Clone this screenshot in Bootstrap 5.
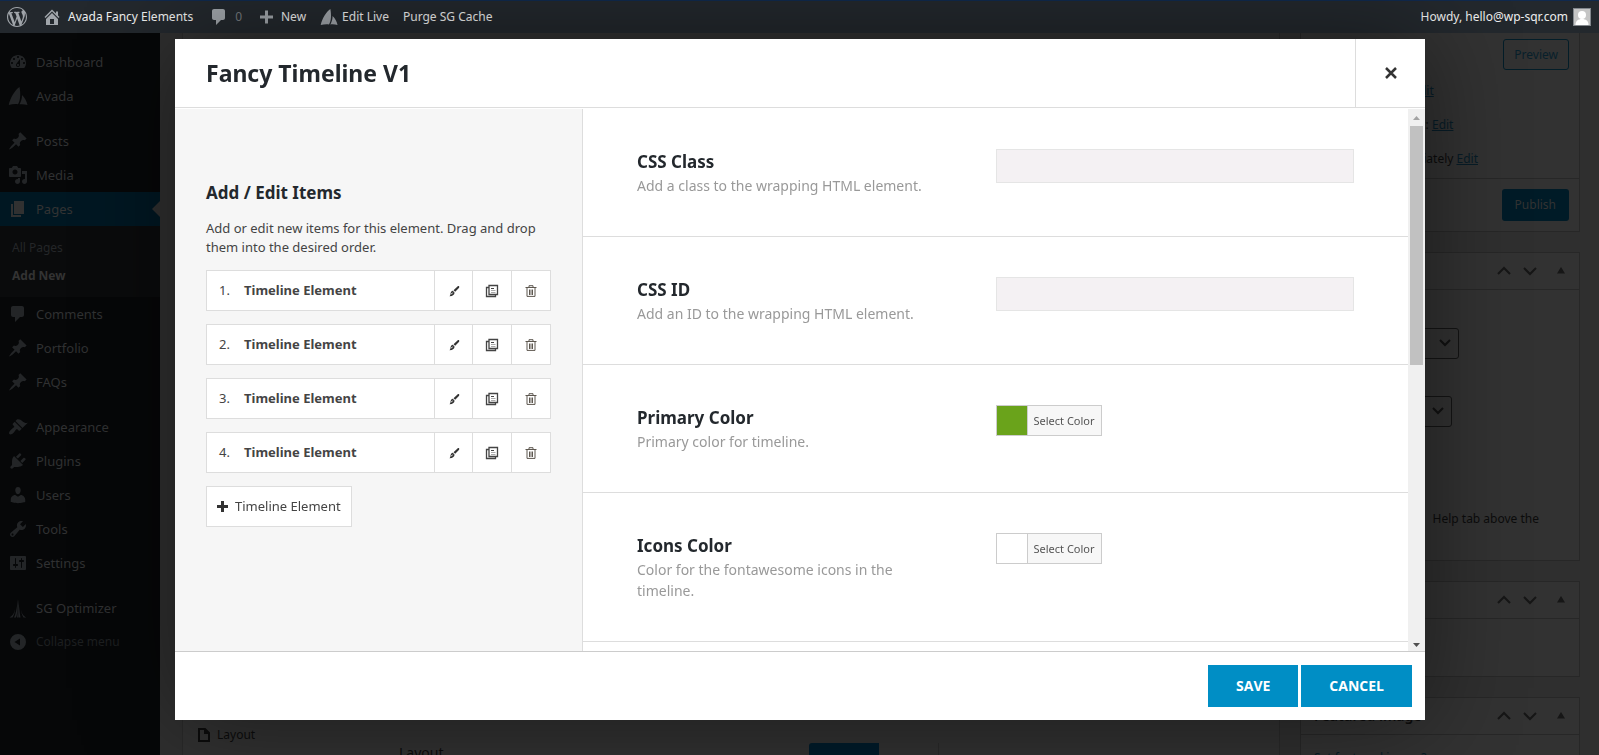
<!DOCTYPE html>
<html lang="en">
<head>
<meta charset="utf-8">
<meta name="viewport" content="width=device-width, initial-scale=1">
<title>Fancy Timeline V1</title>
<link rel="stylesheet" href="https://cdn.jsdelivr.net/npm/bootstrap@5.3.0/dist/css/bootstrap.min.css">
<style>
  body { height: 100vh; overflow: hidden; background: #2f2f2f; font: 12px/20px "Noto Sans", sans-serif; color: #0c0c0c; }
  a { color: inherit; text-decoration: none; }
  .ico { width: 20px; height: 20px; fill: currentColor; flex: none; }

  /* admin bar */
  .adminbar { height: 33px; background: #23282d; border-top: 1px solid #10294d; color: #eee; padding: 0 8px 0 0; }
  .adminbar a { height: 32px; padding: 0 7px; gap: 5px; }
  .adminbar .site { padding: 0 9px 0 8px; gap: 6px; }
  .adminbar .ico { color: #a0a5aa; }
  .adminbar .live { gap: 4px; }
  .adminbar .live .ico { width: 18px; height: 18px; }
  .adminbar .count { color: #75797d; gap: 6px; }
  .avatar { width: 18px; height: 18px; border: 1px solid #82878c; background: #c5c5c5; fill: #fff; }

  /* side menu */
  .sidemenu { width: 160px; flex: none; background: #060708; color: #303132; padding-top: 12px; font-size: 13px; }
  .sidemenu a { height: 34px; padding-left: 8px; gap: 8px; }
  .sidemenu .ico { color: #232527; }
  .sidemenu .gap-top { margin-top: 11px; }
  .sidemenu .current { background: #001722; color: #333; }
  .sidemenu .current .ico { color: #313131; }
  .sidemenu .current::after { content: ""; margin-left: auto; border: 8px solid transparent; border-right-color: #2f2f2f; border-left: 0; }
  .submenu { background: #0a0b0c; padding: 8px 0 7px; font-size: 12px; color: #242628; }
  .submenu a { height: 28px; padding-left: 12px; }
  .submenu .on { color: #333; font-weight: 700; }
  .sidemenu .fold { color: #1d1f20; font-size: 12px; }

  /* editor behind the dialog */
  .editor { padding: 0 19px 0 22px; gap: 20px; overflow: hidden; }
  .canvas { border: 1px solid #292929; border-top: 0; border-bottom: 0; background: #313131; padding: 0 14px; }
  .tab-row { height: 16px; gap: 6px; }
  .peek-row { height: 12px; }
  .layout-name { width: 612px; padding-left: 202px; font-size: 14px; }
  .blue-tab { width: 70px; height: 20px; border-radius: 3px 0 0 0; background: #001b2a; }
  .blue-gap { width: 60px; border-right: 1px solid #292929; }
  .boxes { width: 280px; flex: none; }
  .pbox { border: 1px solid #272727; background: #323232; margin-bottom: 20px; }
  .pbox header { height: 37px; border-bottom: 1px solid #272727; gap: 6px; padding: 0 8px 0 13px; font-size: 14px; font-weight: 600; }
  .pbox header svg { width: 20px; height: 20px; fill: none; stroke: #161616; stroke-width: 2; }
  .pbox header .tri { fill: #161616; stroke: none; margin-left: 5px; }
  .wpbtn { height: 31px; border: 1px solid #031d28; border-radius: 3px; background: transparent; color: #08202b; padding: 0 10px; }
  .wpbtn.full { height: 32px; border: 0; background: #001b27; color: #333; padding: 0 13px; }
  .boxes u { color: #071c27; }
  .preview-row { padding: 6px 10px 4px; }
  .publish-row { padding: 10px; border-top: 1px solid #272727; margin-top: 2px; }
  .pubrow { height: 34px; line-height: 34px; padding-left: 38px; }
  .wpsel { appearance: none; height: 31px; border: 1px solid #141414; border-radius: 3px; background: transparent; color: #0c0c0c; }
  .selwrap svg { position: absolute; right: 8px; top: 10px; width: 12px; height: 10px; fill: none; stroke: #111; stroke-width: 2; }
  .sel-parent { width: 147px; margin: 38px 0 37px 11px; }
  .sel-template { width: 140px; margin-left: 11px; }
  .help-note { padding: 82px 40px 0 0; }
  .thumb-link { padding: 13px; color: #071c27; display: block; }

  /* dialog */
  .layer { position: fixed; inset: 0; padding: 39px 174px 35px 175px; color: #444; font-size: 13px; }
  .dialog { background: #fff; box-shadow: 0 0 90px rgba(0, 0, 0, .45); }
  .dlg-head { height: 69px; border-bottom: 1px solid #ddd; }
  .dlg-head h1 { font-size: 23px; line-height: 32px; font-weight: 700; color: #23282d; padding-left: 31px; }
  .dlg-close { width: 70px; border: 0; border-left: 1px solid #ddd; background: #fff; color: #333; }
  .dlg-close svg { width: 14px; height: 14px; stroke: currentColor; stroke-width: 2.500; display: block; margin: 0 auto; }
  .dlg-body { min-height: 0; margin-top: 1px; }
  .items-pane { width: 408px; flex: none; background: #f6f6f6; border-right: 1px solid #ddd; padding: 71px 31px 0; line-height: 19px; }
  h2 { font-size: 17px; line-height: 26px; font-weight: 700; color: #23282d; margin: 0; }
  .items-pane p { margin: 13px 0; }
  .item { height: 41px; border: 1px solid #ddd; background: #fff; margin-bottom: 13px; }
  .item .num { width: 37px; padding-left: 12px; }
  .item strong { font-weight: 700; }
  .item button { width: 39px; border: 0; border-left: 1px solid #ddd; background: #fff; color: #444; padding: 0; }
  .item .num + strong + button { width: 38px; }
  .item svg { width: 14px; height: 14px; display: block; margin: auto; }
  .add-item { height: 41px; border: 1px solid #ddd; background: #fff; color: #444; gap: 7px; padding: 0 10px; }
  .add-item svg { width: 11px; height: 11px; fill: #333; }
  .opts { overflow: hidden; min-width: 0; }
  .opt { padding: 40px 54px; border-bottom: 1px solid #ddd; }
  .opt .about { width: 50%; padding-right: 50px; font-size: 14px; line-height: 21px; color: #999; }
  .opt label { font-size: 17px; line-height: 26px; font-weight: 700; color: #23282d; display: block; }
  .opt .field { width: 50%; }
  .opt input { width: 100%; height: 34px; display: block; background: #f4f1f3; border: 1px solid #e5e5e5; border-radius: 0; }
  .picker { height: 31px; border: 1px solid #ccc; background: #f7f7f7; padding: 0; font-size: 11px; color: #555; }
  .picker i { width: 31px; border-right: 1px solid #ccc; }
  .picker span { padding: 0 6px; line-height: 29px; }
  .sbar { width: 17px; flex: none; background: #f0f0f0; padding: 0 2px; }
  .sbar .thumb { height: 239px; background: #c1c1c1; }
  .sbar svg { height: 17px; width: 13px; flex: none; }
  .dlg-foot { height: 69px; border-top: 1px solid #ccc; padding-right: 13px; gap: 3px; }
  .dlg-foot button { height: 42px; border: 0; background: #008ec5; color: #fff; font: 700 14px/20px "Open Sans", sans-serif; padding: 0 28px; }
</style>
</head>
<body class="d-flex flex-column">

<svg class="d-none">
  <symbol id="wp" viewBox="0 0 20 20"><path d="M20 10c0-5.51-4.49-10-10-10C4.48 0 0 4.49 0 10c0 5.52 4.48 10 10 10 5.51 0 10-4.48 10-10zM7.78 15.37L4.37 6.22c.55-.02 1.17-.08 1.17-.08.5-.06.44-1.13-.06-1.11 0 0-1.45.11-2.37.11-.18 0-.37 0-.58-.01C4.12 2.69 6.87 1.11 10 1.11c2.33 0 4.45.87 6.05 2.34-.68-.11-1.65.39-1.65 1.58 0 .74.45 1.36.9 2.1.35.61.55 1.36.55 2.46 0 1.49-1.4 5-1.4 5l-3.03-8.37c.54-.02.82-.17.82-.17.5-.05.44-1.25-.06-1.22 0 0-1.44.12-2.38.12-.87 0-2.33-.12-2.33-.12-.5-.03-.56 1.2-.06 1.22l.92.08 1.26 3.41zM17.41 10c.24-.64.74-1.87.43-4.25.7 1.29 1.05 2.71 1.05 4.25 0 3.29-1.73 6.24-4.4 7.78.97-2.59 1.94-5.2 2.92-7.78zM6.1 18.09C3.12 16.65 1.11 13.53 1.11 10c0-1.3.23-2.48.72-3.59C3.25 10.3 4.67 14.2 6.1 18.09zm4.03-6.63l2.58 6.98c-.86.29-1.76.45-2.71.45-.79 0-1.57-.11-2.29-.33.81-2.38 1.62-4.74 2.42-7.1z"/></symbol>
  <symbol id="home" viewBox="0 0 20 20"><path d="M16 8.5l1.53 1.53-1.06 1.06L10 4.6l-6.47 6.49-1.06-1.06L10 2.5l4 4v-2h2v4zm-6-2.46l6 5.99V18H4v-5.97zM12 17v-5H8v5h4z"/></symbol>
  <symbol id="comment" viewBox="0 0 20 20"><path d="M5 2h9c1.1 0 2 .9 2 2v7c0 1.1-.9 2-2 2h-2l-5 5v-5H5c-1.1 0-2-.9-2-2V4c0-1.1.9-2 2-2z"/></symbol>
  <symbol id="plus" viewBox="0 0 20 20"><path d="M17 8.500v3h-5v5H9v-5H4v-3h5v-5h3v5z"/></symbol>
  <symbol id="avada" viewBox="0 0 20 20"><path d="M11.500 1C7 4 2 12 .8 19c3-.8 6-1.200 9.200-.8C12.500 14.500 12.800 8 11.500 1zM14 9c0 3.500-.8 6.300-2.500 9.300 3-.3 5.500 0 8 .7-.8-4-2.500-7-5.500-10z"/></symbol>
  <symbol id="dash" viewBox="0 0 20 20"><path d="M3.760 16h12.480c1.100-1.370 1.760-3.110 1.760-5 0-4.420-3.580-8-8-8s-8 3.580-8 8c0 1.890.66 3.630 1.760 5zM10 4c.55 0 1 .45 1 1s-.45 1-1 1-1-.45-1-1 .45-1 1-1zM6 6c.55 0 1 .45 1 1s-.45 1-1 1-1-.45-1-1 .45-1 1-1zm8 0c.55 0 1 .45 1 1s-.45 1-1 1-1-.45-1-1 .45-1 1-1zm-5.370 5.550L12 7v6c0 1.100-.9 2-2 2s-2-.9-2-2c0-.57.24-1.080.63-1.450zM4 10c.55 0 1 .45 1 1s-.45 1-1 1-1-.45-1-1 .45-1 1-1zm12 0c.55 0 1 .45 1 1s-.45 1-1 1-1-.45-1-1 .45-1 1-1zm-5 3c0-.55-.45-1-1-1s-1 .45-1 1 .45 1 1 1 1-.45 1-1z"/></symbol>
  <symbol id="pin" viewBox="0 0 20 20"><path d="M10.440 3.020l1.820-1.820 6.360 6.350-1.830 1.820c-1.050-.68-2.480-.57-3.410.36l-.75.75c-.92.93-1.040 2.350-.35 3.410l-1.830 1.820-2.410-2.410-2.800 2.790c-.42.42-3.380 2.710-3.800 2.290s1.860-3.390 2.280-3.810l2.790-2.790L4.100 9.360l1.830-1.820c1.050.69 2.480.57 3.400-.36l.75-.75c.93-.92 1.050-2.350.36-3.410z"/></symbol>
  <symbol id="media" viewBox="0 0 20 20"><path d="M13 11V4c0-.55-.45-1-1-1h-1.670L9 1H5L3.670 3H2c-.55 0-1 .45-1 1v7c0 .55.45 1 1 1h10c.55 0 1-.45 1-1zM7 4.500c1.380 0 2.500 1.120 2.500 2.500S8.380 9.500 7 9.500 4.500 8.380 4.500 7 5.620 4.500 7 4.500zM14 6h5v10.500c0 1.380-1.120 2.500-2.500 2.500S14 17.880 14 16.500s1.120-2.500 2.500-2.500c.17 0 .34.02.5.05V9h-3V6zm-4 8.050V13h2v3.500c0 1.380-1.120 2.500-2.500 2.500S7 17.880 7 16.500 8.120 14 9.500 14c.17 0 .34.02.5.05z"/></symbol>
  <symbol id="page" viewBox="0 0 20 20"><path d="M6 15V2h10v13H6zm-1 1h8v2H3V5h2v11z"/></symbol>
  <symbol id="brush" viewBox="0 0 20 20"><path d="M14.480 11.060L7.410 3.990l1.500-1.500c.5-.56 2.300-.47 3.510.32 1.210.8 1.430 1.280 2.910 2.100 1.180.64 2.450 1.260 4.450.85zm-.71.71L6.700 4.700 4.930 6.470c-.39.39-.39 1.020 0 1.410l1.060 1.060c.39.39.39 1.030 0 1.420-.6.6-1.430 1.110-2.210 1.690-.35.26-.7.53-1.010.84C1.430 14.230.4 16.080 1.400 17.070c.99 1 2.840-.03 4.180-1.360.31-.31.58-.66.85-1.020.57-.78 1.080-1.610 1.690-2.210.39-.39 1.020-.39 1.410 0l1.060 1.060c.39.39 1.020.39 1.410 0z"/></symbol>
  <symbol id="plug" viewBox="0 0 20 20"><path d="M13.110 4.360L9.870 7.600 8 5.730l3.240-3.240c.35-.34 1.050-.2 1.560.32.52.51.66 1.210.31 1.550zm-8 1.770l.91-1.120 9.010 9.010-1.190.84c-.71.71-2.630 1.160-3.820 1.160H6.140L4.900 17.260c-.59.59-1.540.59-2.120 0-.59-.58-.59-1.530 0-2.120l1.240-1.240v-3.880c0-1.130.4-3.190 1.090-3.890zm7.260 3.970l3.240-3.240c.34-.35 1.040-.21 1.550.31.52.51.66 1.210.31 1.550l-3.240 3.250z"/></symbol>
  <symbol id="user" viewBox="0 0 20 20"><path d="M10 9.250c-2.270 0-2.730-3.440-2.730-3.440C7 4.020 7.820 2 9.970 2c2.160 0 2.980 2.020 2.710 3.810 0 0-.41 3.440-2.680 3.440zm0 2.570L12.720 10c2.390 0 4.520 2.330 4.520 4.530v2.490s-3.650 1.130-7.240 1.130c-3.650 0-7.240-1.130-7.240-1.130v-2.490c0-2.250 1.940-4.480 4.470-4.480z"/></symbol>
  <symbol id="tool" viewBox="0 0 20 20"><path d="M16.680 9.770c-1.340 1.340-3.300 1.670-4.950.99l-5.410 6.520c-.99.99-2.590.99-3.580 0s-.99-2.590 0-3.570l6.520-5.420c-.68-1.650-.35-3.610.99-4.950 1.280-1.280 3.120-1.620 4.720-1.060l-2.890 2.890 2.820 2.820 2.860-2.870c.53 1.580.18 3.390-1.080 4.650zM3.810 16.210c.4.39 1.040.39 1.430 0 .4-.4.4-1.040 0-1.430-.39-.4-1.030-.4-1.430 0-.39.39-.39 1.030 0 1.430z"/></symbol>
  <symbol id="sliders" viewBox="0 0 20 20"><path d="M18 16V4c0-.55-.45-1-1-1H3c-.55 0-1 .45-1 1v12c0 .55.45 1 1 1h14c.55 0 1-.45 1-1zM8 11h1c.55 0 1 .45 1 1s-.45 1-1 1H8v1.500c0 .28-.22.5-.5.5s-.5-.22-.5-.5V13H6c-.55 0-1-.45-1-1s.45-1 1-1h1V5.500c0-.28.22-.5.5-.5s.5.22.5.5V11zm5-2h-1c-.55 0-1-.45-1-1s.45-1 1-1h1V5.500c0-.28.22-.5.5-.5s.5.22.5.5V7h1c.55 0 1 .45 1 1s-.45 1-1 1h-1v5.500c0 .28-.22.5-.5.5s-.5-.22-.5-.5V9z"/></symbol>
  <symbol id="sg" viewBox="0 0 20 20"><path d="M10 1c-1 6-1.500 14-4 18.500h2C9.500 16 9.800 8 10 1zm.3 0c0 7 0 13 .2 18.500h2C11.500 14 11 8 10.300 1zM10 1c.3 5-.2 14-.9 18.500h1.100zM13 11c.5 5 2.500 7 5.500 8.500h-3C14 17 13 14 13 11zM7 11c-.5 4-2.500 7-5.500 8.500h3C6 17 7 14 7 11z"/></symbol>
  <symbol id="fold" viewBox="0 0 20 20"><path fill-rule="evenodd" d="M10 2a8 8 0 1 0 0 16 8 8 0 0 0 0-16zm2 4.500v7L6.500 10z"/></symbol>
  <symbol id="up" viewBox="0 0 20 20"><path d="M4 13l6-6 6 6"/></symbol>
  <symbol id="down" viewBox="0 0 20 20"><path d="M4 7l6 6 6-6"/></symbol>
  <symbol id="tri" viewBox="0 0 20 20"><path d="M10 6l4 6.500H6z"/></symbol>
  <symbol id="edit" viewBox="0 0 14 14"><path d="M12 2.300c.6.600.3 1.100-.1 1.600L8.200 7.800 6.500 6.200l4-3.800c.5-.4 1-.6 1.500-.1z" fill="#333"/><path d="M5.800 6.800l1.700 1.600c.2 2-1.500 3.600-5 3.800 1-.8.800-1.700 1.100-2.900.3-1.300 1-2.400 2.200-2.500z" fill="#333"/><path d="M4.200 10.300l1.300-1.600" stroke="#fff"/></symbol>
  <symbol id="copy" viewBox="0 0 14 14"><path d="M4 1.500h8.500v9H4zM3.500 3.500h-2v9h9v-1.500" fill="none" stroke="#444" stroke-width="1.300"/><path d="M6 4.500h3" stroke="#444"/><path d="M6 6.500h4.500M6 8.500h4.500" stroke="#aaa"/></symbol>
  <symbol id="trash" viewBox="0 0 14 14"><path d="M1.500 3.500h11M5 3V1.700h4V3M3 4v8.400h8V4M5.500 5.500v5.500M7 5.500v5.500M8.500 5.500v5.500" fill="none" stroke="#5d574f"/></symbol>
</svg>

<nav class="adminbar d-flex align-items-center flex-shrink-0">
  <a class="d-flex align-items-center" href="#" aria-label="WordPress"><svg class="ico"><use href="#wp"/></svg></a>
  <a class="d-flex align-items-center site" href="#"><svg class="ico"><use href="#home"/></svg>Avada Fancy Elements</a>
  <a class="d-flex align-items-center count" href="#"><svg class="ico"><use href="#comment"/></svg>0</a>
  <a class="d-flex align-items-center" href="#"><svg class="ico"><use href="#plus"/></svg>New</a>
  <a class="d-flex align-items-center live" href="#"><svg class="ico"><use href="#avada"/></svg>Edit Live</a>
  <a class="d-flex align-items-center" href="#">Purge SG Cache</a>
  <a class="d-flex align-items-center ms-auto pe-0" href="#">Howdy, hello@wp-sqr.com<svg class="avatar" viewBox="0 0 16 16"><circle cx="8" cy="6" r="4"/><path d="M1.500 16c0-4 2.500-6 6.500-6s6.500 2 6.500 6z"/></svg></a>
</nav>

<div class="d-flex flex-grow-1 overflow-hidden">
  <nav class="sidemenu">
    <a class="d-flex align-items-center" href="#"><svg class="ico"><use href="#dash"/></svg>Dashboard</a>
    <a class="d-flex align-items-center" href="#"><svg class="ico"><use href="#avada"/></svg>Avada</a>
    <a class="d-flex align-items-center gap-top" href="#"><svg class="ico"><use href="#pin"/></svg>Posts</a>
    <a class="d-flex align-items-center" href="#"><svg class="ico"><use href="#media"/></svg>Media</a>
    <a class="d-flex align-items-center current" href="#"><svg class="ico"><use href="#page"/></svg>Pages</a>
    <div class="submenu">
      <a class="d-flex align-items-center" href="#">All Pages</a>
      <a class="d-flex align-items-center on" href="#">Add New</a>
    </div>
    <a class="d-flex align-items-center" href="#"><svg class="ico"><use href="#comment"/></svg>Comments</a>
    <a class="d-flex align-items-center" href="#"><svg class="ico"><use href="#pin"/></svg>Portfolio</a>
    <a class="d-flex align-items-center" href="#"><svg class="ico"><use href="#pin"/></svg>FAQs</a>
    <a class="d-flex align-items-center gap-top" href="#"><svg class="ico"><use href="#brush"/></svg>Appearance</a>
    <a class="d-flex align-items-center" href="#"><svg class="ico"><use href="#plug"/></svg>Plugins</a>
    <a class="d-flex align-items-center" href="#"><svg class="ico"><use href="#user"/></svg>Users</a>
    <a class="d-flex align-items-center" href="#"><svg class="ico"><use href="#tool"/></svg>Tools</a>
    <a class="d-flex align-items-center" href="#"><svg class="ico"><use href="#sliders"/></svg>Settings</a>
    <a class="d-flex align-items-center gap-top" href="#"><svg class="ico"><use href="#sg"/></svg>SG Optimizer</a>
    <a class="d-flex align-items-center fold" href="#"><svg class="ico"><use href="#fold"/></svg>Collapse menu</a>
  </nav>

  <main class="editor d-flex flex-grow-1">
    <section class="canvas flex-grow-1 d-flex flex-column justify-content-end">
      <div class="tab-row d-flex align-items-center">
        <svg width="14" height="14" viewBox="0 0 14 14" fill="none" stroke="#0c0c0c" stroke-width="2"><path d="M2 1h6l4 4v8H2zM8 1v4h4"/></svg>Layout
      </div>
      <div class="peek-row d-flex">
        <div class="layout-name">Layout</div>
        <div class="blue-tab"></div>
        <div class="blue-gap"></div>
      </div>
    </section>

    <aside class="boxes">
      <section class="pbox border-top-0">
        <div class="preview-row d-flex justify-content-end"><button class="wpbtn">Preview</button></div>
        <div class="pubrow">Status: Draft <u>Edit</u></div>
        <div class="pubrow">Visibility: Public: <u>Edit</u></div>
        <div class="pubrow">Publish immediately <u>Edit</u></div>
        <div class="publish-row d-flex justify-content-end"><button class="wpbtn full">Publish</button></div>
      </section>
      <section class="pbox" style="height:309px">
        <header class="d-flex align-items-center justify-content-end"><svg><use href="#up"/></svg><svg><use href="#down"/></svg><svg class="tri"><use href="#tri"/></svg></header>
        <div class="selwrap sel-parent position-relative"><select class="wpsel w-100" aria-label="Parent"></select><svg viewBox="0 0 12 10"><path d="M1 2l5 5 5-5"/></svg></div>
        <div class="selwrap sel-template position-relative"><select class="wpsel w-100" aria-label="Template"></select><svg viewBox="0 0 12 10"><path d="M1 2l5 5 5-5"/></svg></div>
        <div class="help-note text-end">Help tab above the</div>
      </section>
      <section class="pbox" style="height:96px">
        <header class="d-flex align-items-center justify-content-end"><svg><use href="#up"/></svg><svg><use href="#down"/></svg><svg class="tri"><use href="#tri"/></svg></header>
      </section>
      <section class="pbox">
        <header class="d-flex align-items-center"><span class="me-auto">Featured image</span><svg><use href="#up"/></svg><svg><use href="#down"/></svg><svg class="tri"><use href="#tri"/></svg></header>
        <a class="thumb-link" href="#">Set featured image?</a>
      </section>
    </aside>
  </main>
</div>

<div class="layer">
  <div class="dialog h-100 d-flex flex-column" role="dialog" aria-labelledby="dlg-title">
    <div class="dlg-head d-flex flex-shrink-0">
      <h1 id="dlg-title" class="m-0 align-self-center flex-grow-1">Fancy Timeline V1</h1>
      <button class="dlg-close" aria-label="Close"><svg viewBox="0 0 14 14"><path d="M2 2l10 10M12 2L2 12"/></svg></button>
    </div>
    <div class="dlg-body d-flex flex-grow-1">
      <section class="items-pane">
        <h2>Add / Edit Items</h2>
        <p>Add or edit new items for this element. Drag and drop them into the desired order.</p>
        <div class="item d-flex"><span class="num align-self-center">1.</span><strong class="align-self-center flex-grow-1">Timeline Element</strong><button aria-label="Edit"><svg><use href="#edit"/></svg></button><button aria-label="Clone"><svg><use href="#copy"/></svg></button><button aria-label="Delete"><svg><use href="#trash"/></svg></button></div>
        <div class="item d-flex"><span class="num align-self-center">2.</span><strong class="align-self-center flex-grow-1">Timeline Element</strong><button aria-label="Edit"><svg><use href="#edit"/></svg></button><button aria-label="Clone"><svg><use href="#copy"/></svg></button><button aria-label="Delete"><svg><use href="#trash"/></svg></button></div>
        <div class="item d-flex"><span class="num align-self-center">3.</span><strong class="align-self-center flex-grow-1">Timeline Element</strong><button aria-label="Edit"><svg><use href="#edit"/></svg></button><button aria-label="Clone"><svg><use href="#copy"/></svg></button><button aria-label="Delete"><svg><use href="#trash"/></svg></button></div>
        <div class="item d-flex"><span class="num align-self-center">4.</span><strong class="align-self-center flex-grow-1">Timeline Element</strong><button aria-label="Edit"><svg><use href="#edit"/></svg></button><button aria-label="Clone"><svg><use href="#copy"/></svg></button><button aria-label="Delete"><svg><use href="#trash"/></svg></button></div>
        <button class="add-item d-inline-flex align-items-center"><svg viewBox="0 0 11 11"><path d="M4 0h3v4h4v3H7v4H4V7H0V4h4z"/></svg>Timeline Element</button>
      </section>
      <section class="opts flex-grow-1">
        <div class="opt d-flex">
          <div class="about"><label for="css-class">CSS Class</label>Add a class to the wrapping HTML element.</div>
          <div class="field"><input id="css-class" type="text"></div>
        </div>
        <div class="opt d-flex">
          <div class="about"><label for="css-id">CSS ID</label>Add an ID to the wrapping HTML element.</div>
          <div class="field"><input id="css-id" type="text"></div>
        </div>
        <div class="opt d-flex">
          <div class="about"><label for="primary">Primary Color</label>Primary color for timeline.</div>
          <div class="field"><button id="primary" class="picker d-inline-flex align-items-stretch"><i style="background:#6aa31b"></i><span>Select Color</span></button></div>
        </div>
        <div class="opt d-flex">
          <div class="about"><label for="icons">Icons Color</label>Color for the fontawesome icons in the timeline.</div>
          <div class="field"><button id="icons" class="picker d-inline-flex align-items-stretch"><i style="background:#fff"></i><span>Select Color</span></button></div>
        </div>
      </section>
      <div class="sbar d-flex flex-column" aria-hidden="true">
        <svg viewBox="0 0 13 17"><path d="M3 11l3.500-4 3.500 4z" fill="#a3a3a3"/></svg>
        <div class="thumb"></div>
        <svg class="mt-auto" viewBox="0 0 13 17"><path d="M3 9h7l-3.500 4z" fill="#505050"/></svg>
      </div>
    </div>
    <div class="dlg-foot d-flex align-items-center justify-content-end flex-shrink-0">
      <button>SAVE</button>
      <button>CANCEL</button>
    </div>
  </div>
</div>
<script src="https://cdn.jsdelivr.net/npm/bootstrap@5.3.0/dist/js/bootstrap.bundle.min.js"></script>
</body>
</html>
